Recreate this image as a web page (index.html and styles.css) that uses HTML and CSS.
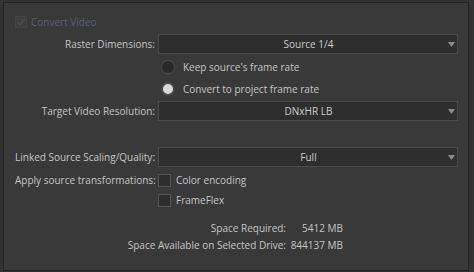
FILE: index.html
```html
<!DOCTYPE html>
<html>
<head>
<meta charset="utf-8">
<link rel="stylesheet" href="styles.css">
</head>
<body>
<div class="panel">
  <div class="convert">
    <span class="check check-disabled">
      <svg width="10" height="10" viewBox="0 0 10 10"><path d="M1.5 5.2 L4 7.8 L8.8 1.8" fill="none" stroke="#4e4e4e" stroke-width="1.6"/></svg>
    </span>
    <span class="convert-text">Convert Video</span>
  </div>

  <div class="field field-raster">
    <span class="lbl">Raster Dimensions:</span>
    <div class="select"><span class="select-text">Source 1/4</span><svg class="arrow" width="7" height="5" viewBox="0 0 7 5"><polygon points="0,0 7,0 3.5,5" fill="#8c8c8c"/></svg></div>
  </div>

  <div class="field field-radio1">
    <span></span>
    <div class="option option-radio"><span class="radio"></span><span class="opt-text">Keep source's frame rate</span></div>
  </div>

  <div class="field field-radio2">
    <span></span>
    <div class="option option-radio"><span class="radio radio-on"></span><span class="opt-text">Convert to project frame rate</span></div>
  </div>

  <div class="field field-target">
    <span class="lbl">Target Video Resolution:</span>
    <div class="select"><span class="select-text">DNxHR LB</span><svg class="arrow" width="7" height="5" viewBox="0 0 7 5"><polygon points="0,0 7,0 3.5,5" fill="#8c8c8c"/></svg></div>
  </div>

  <div class="field field-linked">
    <span class="lbl">Linked Source Scaling/Quality:</span>
    <div class="select"><span class="select-text">Full</span><svg class="arrow" width="7" height="5" viewBox="0 0 7 5"><polygon points="0,0 7,0 3.5,5" fill="#8c8c8c"/></svg></div>
  </div>

  <div class="field field-apply">
    <span class="lbl">Apply source transformations:</span>
    <div class="option option-check"><span class="check"></span><span class="opt-text">Color encoding</span></div>
  </div>

  <div class="field field-flex">
    <span></span>
    <div class="option option-check"><span class="check"></span><span class="opt-text">FrameFlex</span></div>
  </div>

  <div class="space space-req">
    <span class="space-lbl">Space Required:</span>
    <span class="space-val">5412 MB</span>
  </div>
  <div class="space space-avail">
    <span class="space-lbl">Space Available on Selected Drive:</span>
    <span class="space-val">844137 MB</span>
  </div>
</div>
</body>
</html>
```
FILE: styles.css
```css
html, body {
  margin: 0;
  padding: 0;
}
body {
  background: #323232;
  font-family: "Open Sans", "Noto Sans", sans-serif;
  font-size: 10px;
  color: #c6c6c6;
  width: 474px;
  height: 272px;
  overflow: hidden;
}
.panel {
  box-sizing: border-box;
  margin: 2px 0 0 3px;
  width: 466px;
  height: 269px;
  border: 1px solid #232323;
  background: #393939;
  padding: 13px 0 0 11px;
}
.convert {
  display: flex;
  align-items: center;
  height: 12px;
}
.check {
  box-sizing: border-box;
  width: 13px;
  height: 13px;
  border: 1px solid #575757;
  background: #2e2e2e;
  flex: none;
  display: flex;
  align-items: center;
  justify-content: center;
}
.check-disabled {
  width: 12px;
  height: 12px;
  border-color: #454545;
  background: #3d3d3d;
}
.convert-text {
  margin-left: 4px;
  color: #5b6170;
}
.field {
  display: grid;
  grid-template-columns: 140px 300px;
  column-gap: 3px;
  align-items: center;
}
.lbl {
  text-align: right;
  white-space: nowrap;
}
.field-raster { margin-top: 6px; height: 20px; }
.field-radio1 { margin-top: 6px; height: 14px; }
.field-radio2 { margin-top: 8px; height: 14px; }
.field-target { margin-top: 5px; height: 20px; }
.field-linked { margin-top: 26px; height: 20px; }
.field-apply { margin-top: 6px; height: 13px; }
.field-flex { margin-top: 7px; height: 13px; }
.select {
  box-sizing: border-box;
  height: 20px;
  border: 1px solid #4b4b4b;
  background: #2e2e2e;
  display: flex;
  align-items: center;
  padding: 0 2px 0 0;
}
.select-text {
  flex: 1;
  text-align: center;
  padding-left: 10px;
  color: #cdcdcd;
}
.arrow {
  flex: none;
  margin-left: 0;
}
.option {
  display: flex;
  align-items: center;
  white-space: nowrap;
}
.option-radio {
  padding-left: 3px;
}
.option-radio .opt-text {
  margin-left: 8px;
}
.option-check .opt-text {
  margin-left: 5px;
}
.radio {
  box-sizing: border-box;
  width: 14px;
  height: 14px;
  border-radius: 50%;
  border: 1px solid #4f4f4f;
  background: #2a2a2a;
  flex: none;
}
.radio-on {
  border: 2px solid #4a4a4a;
  background: #d9d9d9;
}
.space {
  display: grid;
  grid-template-columns: 271px 57px;
  height: 14px;
  align-items: center;
  white-space: nowrap;
}
.space-req { margin-top: 15px; }
.space-avail { margin-top: 3px; }
.space-lbl { text-align: right; }
.space-val { text-align: right; }
```
